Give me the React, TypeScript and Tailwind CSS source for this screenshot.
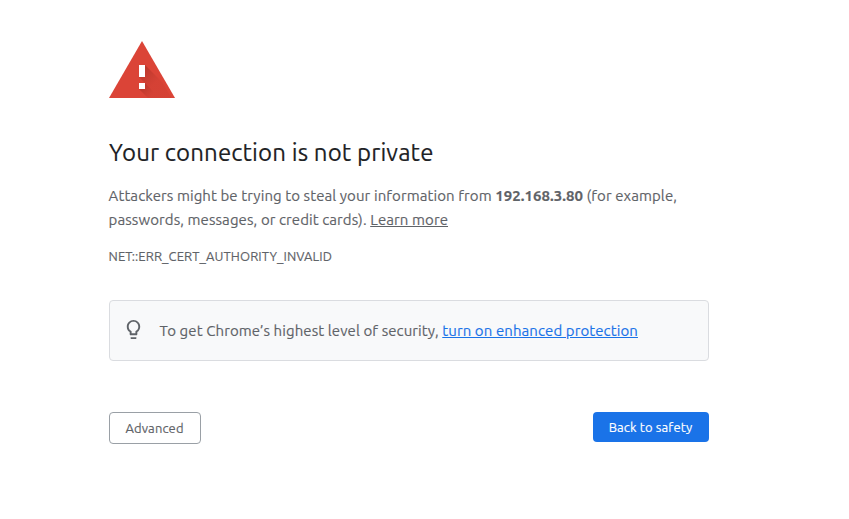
export default function App() {
  return (
    <div className="min-h-[519px] w-full bg-white pl-[109px] pt-[41px] font-['Ubuntu','Noto_Sans',sans-serif] text-[#5f6368] [-webkit-text-stroke:0.15px]">
      <main className="w-[600px]">
        <svg className="block h-[57px] w-[66px]" viewBox="0 0 66 57" aria-hidden="true">
          <defs>
            <linearGradient id="shade" x1="31" y1="29" x2="45" y2="43" gradientUnits="userSpaceOnUse">
              <stop offset="0" stopColor="#a52f25" stopOpacity=".7" />
              <stop offset="1" stopColor="#c23a2e" stopOpacity=".25" />
            </linearGradient>
            <linearGradient id="dotShade" x1="31" y1="46" x2="41" y2="56" gradientUnits="userSpaceOnUse">
              <stop offset="0" stopColor="#a52f25" stopOpacity=".7" />
              <stop offset="1" stopColor="#c23a2e" stopOpacity=".25" />
            </linearGradient>
          </defs>
          <path d="M0 57 33 0l33 57z" fill="#db4437" />
          <path d="M36 24 53.500 41.500 62.500 57H51L36 42l-6-6h6z" fill="url(#shade)" />
          <path d="M36 42 51 57H39l-9-9h6z" fill="url(#dotShade)" />
          <path d="M30 24h6v12h-6zM30 42h6v6h-6z" fill="#fff" />
        </svg>
        <h1 className="mt-10 whitespace-nowrap text-[24px] leading-[29px] tracking-[0.13px] text-[#202124]">
          <span>Your connection is not private</span>
        </h1>
        <p className="-ml-[0.4px] mt-[17px] whitespace-nowrap text-[15px] leading-6 tracking-[0.085px]">
          <span>Attackers might be trying to steal your information from </span>
          <strong className="font-bold tracking-[0.04px]">192.168.3.80</strong>
          <span> (for example,</span>
          <br />
          <span>passwords, messages, or credit cards). </span>
          <a className="underline">Learn more</a>
        </p>
        <p className="-ml-[0.4px] mt-[15px] whitespace-nowrap text-[13px] leading-[18px] tracking-[0.09px]">NET::ERR_CERT_AUTHORITY_INVALID</p>
        <section className="mt-[35px] flex h-[61px] items-center rounded-[4px] border border-[#dadce0] bg-[#f8f9fa] pl-[12px]">
          <svg className="mb-[2px] size-[23px] shrink-0" viewBox="0 0 24 24" fill="#5f6368" aria-hidden="true">
            <path d="M9 21c0 .5.4 1 1 1h4c.6 0 1-.5 1-1v-1H9v1zm3-19C8.100 2 5 5.100 5 9c0 2.400 1.200 4.500 3 5.700V17c0 .5.4 1 1 1h6c.6 0 1-.5 1-1v-2.300c1.800-1.300 3-3.400 3-5.700 0-3.900-3.100-7-7-7zm2.900 11.100-.9.6V16h-4v-2.300l-.9-.6C7.800 12.200 7 10.600 7 9c0-2.800 2.200-5 5-5s5 2.200 5 5c0 1.600-.8 3.200-2.100 4.100z" />
          </svg>
          <p className="ml-[14.500px] whitespace-nowrap text-[15px] leading-6 tracking-[0.09px]">
            <span>To get Chrome’s highest level of security, </span>
            <a className="text-[#1a73e8] underline">turn on enhanced protection</a>
          </p>
        </section>
        <div className="mt-[51px] flex items-start justify-between text-[13px] tracking-[0.12px]">
          <button className="h-8 w-[92px] rounded-[4px] border border-[#9aa0a6] bg-white pr-[1px] pt-[2px]">Advanced</button>
          <button className="h-[30px] w-[116px] rounded-[4px] bg-[#1a73e8] pr-[1px] pt-[2px] text-white">Back to safety</button>
        </div>
      </main>
    </div>
  );
}
